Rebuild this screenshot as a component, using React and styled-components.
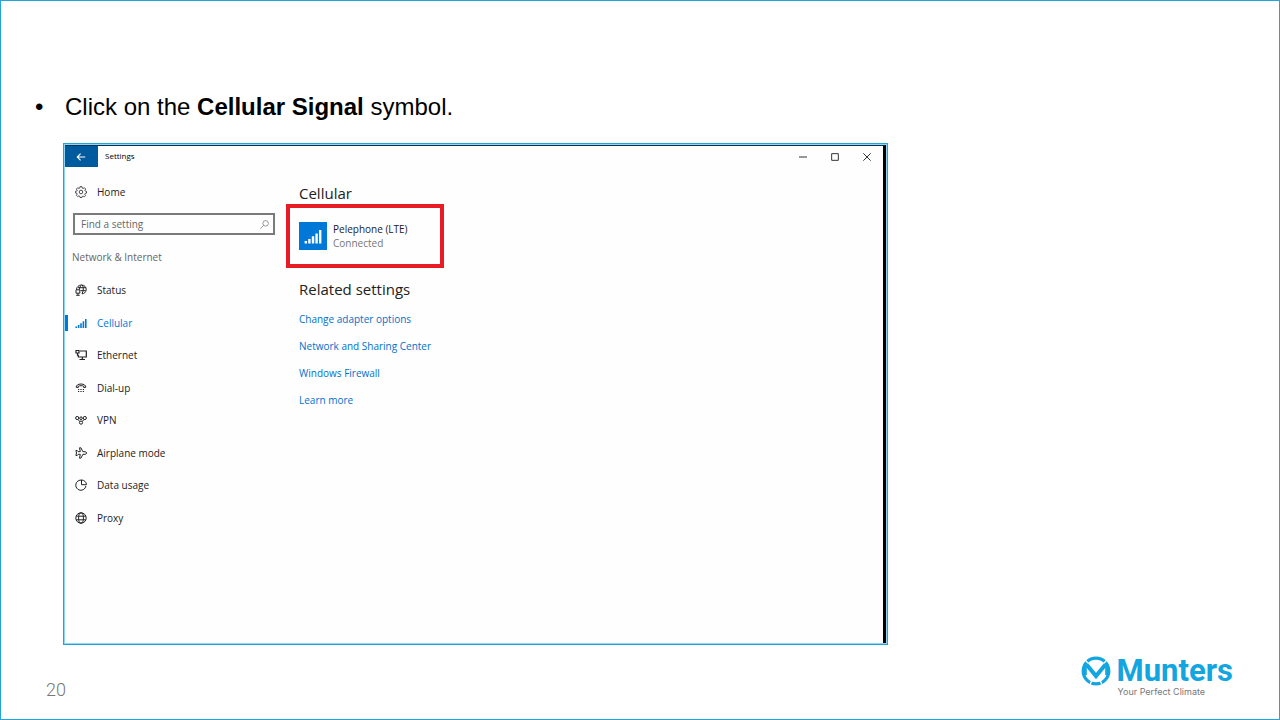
import { useState } from "react";
import styled, { createGlobalStyle } from "styled-components";

const GlobalStyle = createGlobalStyle`
  * {
    box-sizing: border-box;
  }
  body {
    margin: 0;
    background-color: white;
  }
  button,
  input {
    font-family: inherit;
  }
`;

const Slide = styled.div`
  min-height: 100vh;
  display: flex;
  flex-direction: column;
  padding: 92px 46px 22px 34px;
  border: 1px solid #1fa5d6;
  font-family: "Liberation Sans", Arial, sans-serif;
`;

const Steps = styled.ul`
  margin: 0 0 22px;
  padding: 0;
  list-style: none;
`;

const Step = styled.li`
  display: flex;
  font-size: 24px;
  line-height: 28px;
  color: black;
  &::before {
    content: "•";
    width: 30px;
  }
`;

const Frame = styled.section`
  width: 100%;
  max-width: 825px;
  margin-left: 28px;
  padding: 1px;
  border: 1px solid #1fa5d6;
  background-color: #8fd6f5;
`;

const Screen = styled.div`
  min-height: 498px;
  border-top: 1px solid #0a3156;
  border-right: 3px solid black;
  background-color: #fefefe;
  font-family: "Open Sans", "Segoe UI", sans-serif;
  color: #222;
`;

const TitleBar = styled.header`
  display: flex;
  align-items: center;
  height: 21px;
`;

const BackButton = styled.button`
  width: 33px;
  height: 21px;
  display: flex;
  align-items: center;
  justify-content: center;
  padding: 0 2px 0 0;
  border: none;
  background-color: #005a9e;
  color: white;
  cursor: pointer;
`;

const WindowName = styled.span`
  flex: 1;
  margin-left: 7px;
  padding-bottom: 2px;
  font-size: 8px;
  color: black;
`;

const WindowButton = styled.button`
  width: 32px;
  height: 21px;
  display: flex;
  align-items: center;
  justify-content: center;
  padding: 0;
  border: none;
  background: none;
  color: #333;
`;

const Body = styled.div`
  display: grid;
  grid-template-columns: 221px 1fr;
`;

const Sidebar = styled.aside`
  padding-top: 9px;
`;

const NavLink = styled.a`
  display: flex;
  align-items: center;
  gap: 10px;
  padding-left: 10px;
  font-size: 10px;
  line-height: 32px;
  color: ${(props) => (props.$active ? "#0078d7" : "#222")};
  text-decoration: none;
`;

const NavItem = styled.li`
  display: flex;
  align-items: center;
  &::before {
    content: "";
    width: 3px;
    height: 16px;
    margin-right: -3px;
    background-color: ${(props) => (props.$active ? "#0078d7" : "transparent")};
  }
`;

const SearchBox = styled.label`
  display: flex;
  align-items: center;
  height: 22px;
  margin: 5px 11px 0 8px;
  padding: 0 4px 0 6px;
  border: 2px solid #7a7a7a;
  color: #777;
`;

const SearchInput = styled.input`
  flex: 1;
  min-width: 0;
  padding: 0;
  border: none;
  outline: none;
  background: none;
  font-size: 10px;
  &::placeholder {
    color: #666;
    opacity: 1;
  }
`;

const Category = styled.h2`
  margin: 14px 0 9px 7px;
  font-size: 10px;
  font-weight: 400;
  line-height: 16px;
  color: #666;
`;

const NavList = styled.ul`
  display: grid;
  grid-auto-rows: 1fr;
  height: 260px;
  margin: 0;
  padding: 0;
  list-style: none;
`;

const Main = styled.main`
  padding-top: 15px;
`;

const Heading = styled.h1`
  margin: 0 0 0 13px;
  font-size: 15px;
  font-weight: 400;
  line-height: 22px;
  color: #222;
`;

const Connection = styled.button`
  display: flex;
  gap: 6px;
  width: 158px;
  height: 64px;
  margin-bottom: 10px;
  padding: 14px 9px;
  border: 4px solid #e81c24;
  background: none;
  color: #222;
  font-size: 10px;
  line-height: 14px;
  text-align: left;
  cursor: pointer;
`;

const Tile = styled.span`
  width: 28px;
  height: 28px;
  display: flex;
  align-items: center;
  justify-content: center;
  background-color: #0078d7;
  color: white;
`;

const Details = styled.span`
  display: flex;
  flex-direction: column;
`;

const State = styled.span`
  color: #777;
`;

const Links = styled.div`
  display: flex;
  flex-direction: column;
  align-items: flex-start;
  margin: 6px 0 0 13px;
`;

const SettingLink = styled.a`
  font-size: 10px;
  line-height: 27px;
  color: #0070cc;
  text-decoration: none;
`;

const Footer = styled.footer`
  display: flex;
  align-items: flex-end;
  justify-content: space-between;
  margin-top: auto;
  padding-left: 11px;
`;

const PageNumber = styled.span`
  font-family: "Arial Narrow", Roboto, sans-serif;
  font-size: 18px;
  font-weight: 300;
  line-height: 14px;
  color: #777;
`;

const Brand = styled.div`
  display: flex;
  gap: 6px;
`;

const BrandText = styled.div`
  display: flex;
  flex-direction: column;
`;

const BrandName = styled.strong`
  font-family: Roboto, sans-serif;
  font-size: 31px;
  line-height: 30px;
  font-weight: 700;
  color: #12a5df;
`;

const Tagline = styled.span`
  padding-left: 1px;
  font-family: Inter, sans-serif;
  font-size: 9px;
  line-height: 11px;
  color: #777;
`;

const Icon = ({ size = 12, stroke = 1, children }) => (
  <svg
    width={size}
    height={size}
    viewBox="0 0 12 12"
    fill="none"
    stroke="currentColor"
    strokeWidth={stroke}
    aria-hidden="true"
  >
    {children}
  </svg>
);

const Gear = () => (
  <Icon stroke={0.8}>
    <path d="M5 .7h2l.3 1.4.9.4 1.2-.8 1.3 1.4-.8 1.2.4.8 1.2.3v1.7l-1.3.3-.4.9.8 1.2-1.3 1.3-1.2-.8-.8.4L7 11.5H5l-.3-1.3-.8-.4-1.2.8-1.3-1.3.8-1.2-.4-.9-1.3-.3V5.4l1.3-.3.4-.8-.8-1.2 1.3-1.4 1.2.8.8-.4z" />
    <circle cx="6" cy="6" r="1.8" />
  </Icon>
);

const Status = () => (
  <Icon>
    <path d="M1.500 5.500C1.500 3 3.800 1 6.500 1c3 0 5 2.300 4.700 4.800-.3 2.500-2 3.900-4.200 4M3 3.700h7.800M5.500 6.700h5.300M6.500 1c-1.500 1.200-2 2.500-2 4.500M7.300 1c1.300 2 1.500 5.500-.3 8.800" />
    <path d="M1 5.800h3.800v3.400H1zM2.900 9.200v2M1.200 11.300h3.500" />
  </Icon>
);

const Bars = ({ size }) => (
  <Icon size={size} stroke={1.6}>
    <path d="M1.200 11V9.400M3.600 11V8M6 11V6.200M8.400 11V4.300M10.800 11V2" />
  </Icon>
);

const Ethernet = () => (
  <Icon stroke={1.2}>
    <path d="M5 2h6.300v6H3.300V6M7.300 8v2.500M4.500 10.500h5.500M1 1.500h3V4H1zM2.500 4v2.200h1" />
  </Icon>
);

const DialUp = () => (
  <Icon>
    <path d="M1.200 5.300C1 3.500 3 2 6 2s5 1.500 4.800 3.300L8.700 5.500V4.200C7 3.500 5 3.500 3.300 4.200v1.300z" />
    <path d="M3 7.500h6M3 9.500h6" strokeDasharray="1.200 1.200" />
  </Icon>
);

const Vpn = () => (
  <Icon>
    <circle cx="2.200" cy="4" r="1.600" />
    <circle cx="6" cy="4.200" r="1.300" />
    <circle cx="9.800" cy="4" r="1.600" />
    <circle cx="6" cy="8.600" r="1.600" />
    <path d="M3 5.500l1.800 2M9 5.500l-1.800 2" />
  </Icon>
);

const Airplane = () => (
  <Icon>
    <path d="M4.500.8h1.400l2 3.900h2.400c1.600 0 1.600 2.600 0 2.600H7.900l-2 3.900H4.500l.8-3.900H3.200L2.200 8.500H.9L1.500 6 .9 3.500h1.300l1 1.200h2.100z" />
  </Icon>
);

const DataUsage = () => (
  <Icon>
    <path d="M7 1.200A5.100 5.100 0 1 0 10.900 7" />
    <path d="M6.500 1v4.700h5A5 5 0 0 0 6.500 1z" />
  </Icon>
);

const Proxy = () => (
  <Icon>
    <circle cx="6" cy="6" r="5.200" />
    <ellipse cx="6" cy="6" rx="2.400" ry="5.200" />
    <path d="M1.200 4.200h9.600M1.200 7.800h9.600" />
  </Icon>
);

const Logo = () => (
  <svg width="30" height="30" viewBox="0 0 30 30" fill="none" stroke="#12a5df" aria-hidden="true">
    <circle cx="15" cy="15" r="12.800" strokeWidth="3.200" />
    <path d="M3.500 3.500l5 5M26.500 3.500l-5 5M11 24L8.500 30M19 24l2.500 6" stroke="white" strokeWidth="1.400" />
    <path d="M5.500 8.500L15 20l9.500-11.500" strokeWidth="4" />
    <path d="M4.300 9v10M25.700 9v10" strokeWidth="3" />
  </svg>
);

const navItems = [
  { name: "Status", icon: <Status /> },
  { name: "Cellular", icon: <Bars /> },
  { name: "Ethernet", icon: <Ethernet /> },
  { name: "Dial-up", icon: <DialUp /> },
  { name: "VPN", icon: <Vpn /> },
  { name: "Airplane mode", icon: <Airplane /> },
  { name: "Data usage", icon: <DataUsage /> },
  { name: "Proxy", icon: <Proxy /> },
];

const related = [
  "Change adapter options",
  "Network and Sharing Center",
  "Windows Firewall",
  "Learn more",
];

const App = () => {
  const [active, setActive] = useState("Cellular");
  const [query, setQuery] = useState("");

  return (
    <Slide>
      <GlobalStyle />
      <Steps>
        <Step>
          <span>
            Click on the <b>Cellular Signal</b> symbol.
          </span>
        </Step>
      </Steps>
      <Frame>
        <Screen>
          <TitleBar>
            <BackButton aria-label="Back">
              <Icon size={10}>
                <path d="M11 6H1.500M5.500 2l-4 4 4 4" strokeWidth="1.300" />
              </Icon>
            </BackButton>
            <WindowName>Settings</WindowName>
            <WindowButton aria-label="Minimize">
              <Icon size={8} stroke={1.5}>
                <path d="M0 6h12" />
              </Icon>
            </WindowButton>
            <WindowButton aria-label="Maximize">
              <Icon size={8} stroke={1.5}>
                <path d="M1 1h10v10H1z" />
              </Icon>
            </WindowButton>
            <WindowButton aria-label="Close">
              <Icon size={8} stroke={1.5}>
                <path d="M.5.5l11 11M11.500.5l-11 11" />
              </Icon>
            </WindowButton>
          </TitleBar>
          <Body>
            <Sidebar>
              <NavLink href="#home">
                <Gear />
                Home
              </NavLink>
              <SearchBox>
                <SearchInput
                  aria-label="Find a setting"
                  placeholder="Find a setting"
                  value={query}
                  onChange={(e) => setQuery(e.target.value)}
                />
                <Icon size={9}>
                  <circle cx="7.500" cy="4.500" r="3.700" />
                  <path d="M4.800 7.200L.5 11.500" />
                </Icon>
              </SearchBox>
              <Category>Network &amp; Internet</Category>
              <nav>
                <NavList>
                  {navItems.map((item) => (
                    <NavItem key={item.name} $active={item.name === active}>
                      <NavLink
                        href="#settings"
                        $active={item.name === active}
                        onClick={() => setActive(item.name)}
                      >
                        {item.icon}
                        {item.name}
                      </NavLink>
                    </NavItem>
                  ))}
                </NavList>
              </nav>
            </Sidebar>
            <Main>
              <Heading>Cellular</Heading>
              <Connection>
                <Tile>
                  <Bars size={18} />
                </Tile>
                <Details>
                  <span>Pelephone (LTE)</span>
                  <State>Connected</State>
                </Details>
              </Connection>
              <Heading as="h2">Related settings</Heading>
              <Links>
                {related.map((name) => (
                  <SettingLink href="#related" key={name}>
                    {name}
                  </SettingLink>
                ))}
              </Links>
            </Main>
          </Body>
        </Screen>
      </Frame>
      <Footer>
        <PageNumber>20</PageNumber>
        <Brand>
          <Logo />
          <BrandText>
            <BrandName>Munters</BrandName>
            <Tagline>Your Perfect Climate</Tagline>
          </BrandText>
        </Brand>
      </Footer>
    </Slide>
  );
};

export default App;
